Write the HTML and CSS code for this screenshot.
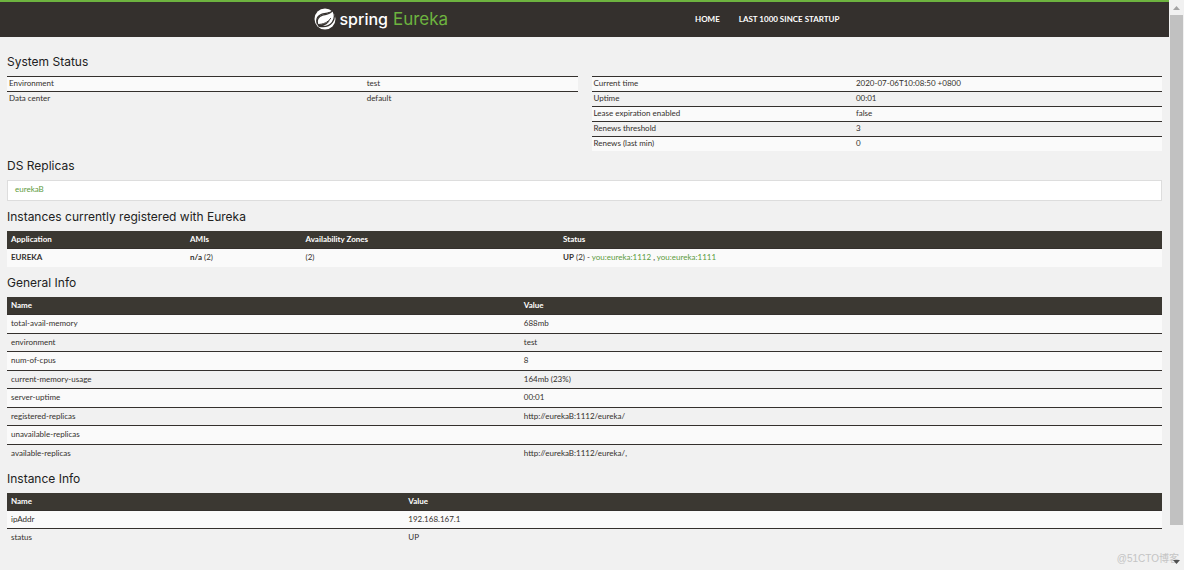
FILE: index.html
```html
<!DOCTYPE html>
<html lang="en">
<head>
<meta charset="utf-8">
<title>Eureka</title>
<link rel="stylesheet" href="styles.css">
</head>
<body>
<div class="window">
  <div class="page">
    <header class="navbar">
      <div class="navbar-inner">
        <a class="brand" href="#">
          <svg class="brand-mark" viewBox="0 0 22 22" aria-hidden="true">
            <circle cx="11" cy="11" r="10.500" fill="#fff"/>
            <path fill="#34302d" d="M18.900 2C16.800 5.500 12.800 5.700 9 6.600 4 7.900 2 11.700 3.400 16.400c1.800.3 3.400.2 4.800-.2 3.700-.8 6.200-2.400 8.300-5-1.800 4.100-5.400 6.600-10.500 7.300l-1.600.1-.6-1C.8 12.500 2.200 7.700 7.300 5.700 11.500 4.200 15.500 5 18.900 2z"/>
            <path fill="none" stroke="#34302d" stroke-width="1.300" d="M19 2.600c1.900 4.300 1.700 8.600-.7 11.700-2.900 3.700-8 5-13.600 3.800"/>
            <path fill="none" stroke="#34302d" stroke-width="1" d="M3.800 16.500c5.600-.2 9.800-1.800 13-6.400"/>
            <path fill="none" stroke="#34302d" stroke-width="1.300" d="M18.700 2.500C16 6.500 12 6.200 8.500 7.200c-4.300 1.200-6.300 4.800-5 9"/>
          </svg>
          <span class="brand-spring">spring</span>
          <span class="brand-eureka">Eureka</span>
        </a>
        <nav class="menu">
          <a href="#">HOME</a>
          <a href="#">LAST 1000 SINCE STARTUP</a>
        </nav>
      </div>
    </header>
    <main class="content">
      <h1>System Status</h1>
      <div class="status">
        <table class="compact env">
          <tbody>
            <tr><td class="key">Environment</td><td>test</td></tr>
            <tr><td>Data center</td><td>default</td></tr>
          </tbody>
        </table>
        <table class="compact runtime">
          <tbody>
            <tr><td class="key">Current time</td><td>2020-07-06T10:08:50 +0800</td></tr>
            <tr><td>Uptime</td><td>00:01</td></tr>
            <tr><td>Lease expiration enabled</td><td>false</td></tr>
            <tr><td>Renews threshold</td><td>3</td></tr>
            <tr><td>Renews (last min)</td><td>0</td></tr>
          </tbody>
        </table>
      </div>
      <h1>DS Replicas</h1>
      <ul class="replicas">
        <li><a href="#">eurekaB</a></li>
      </ul>
      <h1>Instances currently registered with Eureka</h1>
      <table class="striped instances">
        <thead>
          <tr><th class="app">Application</th><th class="amis">AMIs</th><th class="zones">Availability Zones</th><th>Status</th></tr>
        </thead>
        <tbody>
          <tr><td><b>EUREKA</b></td><td><b>n/a</b> (2)</td><td>(2)</td><td><b>UP</b> (2) - <a href="#">you:eureka:1112</a> , <a href="#">you:eureka:1111</a></td></tr>
        </tbody>
      </table>
      <h1>General Info</h1>
      <table class="striped general">
        <thead>
          <tr><th class="name">Name</th><th>Value</th></tr>
        </thead>
        <tbody>
          <tr><td>total-avail-memory</td><td>688mb</td></tr>
          <tr><td>environment</td><td>test</td></tr>
          <tr><td>num-of-cpus</td><td>8</td></tr>
          <tr><td>current-memory-usage</td><td>164mb (23%)</td></tr>
          <tr><td>server-uptime</td><td>00:01</td></tr>
          <tr><td>registered-replicas</td><td>http://eurekaB:1112/eureka/</td></tr>
          <tr><td>unavailable-replicas</td><td></td></tr>
          <tr><td>available-replicas</td><td>http://eurekaB:1112/eureka/,</td></tr>
        </tbody>
      </table>
      <h1>Instance Info</h1>
      <table class="striped instance">
        <thead>
          <tr><th class="name">Name</th><th>Value</th></tr>
        </thead>
        <tbody>
          <tr><td>ipAddr</td><td>192.168.167.1</td></tr>
          <tr><td>status</td><td>UP</td></tr>
        </tbody>
      </table>
    </main>
  </div>
  <div class="watermark">@51CTO博客</div>
  <div class="scrollbar" aria-hidden="true">
    <svg class="arrow up" viewBox="0 0 7 4"><path d="M0 4 3.500 0 7 4z"/></svg>
    <div class="track"><div class="thumb"></div></div>
    <svg class="arrow down" viewBox="0 0 7 4"><path d="M0 0h7L3.500 4z"/></svg>
  </div>
</div>
</body>
</html>
```
FILE: styles.css
```css
* {
  box-sizing: border-box;
}

body {
  margin: 0;
  background: #f1f1f1;
  color: #34302d;
  font-family: Lato, "Open Sans", sans-serif;
  font-size: 8px;
  line-height: 12px;
}

a {
  color: #5b9a3c;
  text-decoration: none;
}

.window {
  position: relative;
  display: flex;
  height: 100vh;
  overflow: hidden;
  background: #f1f1f1;
}

.page {
  flex: 1;
  min-width: 0;
}

.navbar {
  border-top: 2px solid #6db33f;
  background: #34302d;
}

.navbar-inner {
  display: flex;
  justify-content: space-between;
  align-items: center;
  width: 542px;
  height: 35px;
  margin: 0 auto;
  padding: 0 16px 2px 0;
}

.brand {
  display: flex;
  align-items: center;
  line-height: 20px;
}

.brand-mark {
  width: 22px;
  height: 22px;
  margin-right: 4px;
}

.brand-spring {
  margin-right: 5px;
  color: #fff;
  font-family: Inter, sans-serif;
  font-size: 16px;
  font-weight: 500;
}

.brand-eureka {
  color: #6db33f;
  font-family: Inter, sans-serif;
  font-size: 17px;
  font-weight: 400;
}

.menu {
  display: flex;
  gap: 19px;
  font-weight: 700;
}

.menu a {
  color: #fff;
}

.content {
  padding: 17px 7px 0;
}

h1 {
  margin: 0;
  color: #222;
  font-family: Inter, sans-serif;
  font-size: 12px;
  font-weight: 400;
  line-height: 16px;
  padding-bottom: 6px;
}

table {
  width: 100%;
  border-collapse: collapse;
  table-layout: fixed;
}

th,
td {
  text-align: left;
  vertical-align: top;
}

tbody tr:nth-child(odd) {
  background: #fafafa;
}

.status {
  display: grid;
  grid-template-columns: 1fr 1fr;
  align-items: start;
  gap: 14px;
  margin-bottom: 7px;
}

.compact td {
  height: 15px;
  padding: 0 2px;
  border-top: 1px solid #34302d;
}

.compact tr:last-child td {
  height: 14px;
}

.env .key {
  width: 62.7%;
}

.runtime .key {
  width: 46%;
}

.replicas {
  margin: 0 0 8px;
  padding: 0;
  list-style: none;
}

.replicas li {
  height: 21px;
  padding: 2px 7px;
  border: 1px solid #ddd;
  background: #fff;
}

.striped {
  margin-bottom: 8px;
}

.striped th {
  height: 18px;
  padding: 2px 4px;
  background: #3b3832;
  color: #fff;
  font-weight: 700;
}

.striped td {
  height: 18px;
  padding: 2px 4px;
  border-top: 1px solid #34302d;
}

.general tr:nth-child(odd) td {
  height: 19px;
}

.instances .app {
  width: 15.5%;
}

.instances .amis {
  width: 10%;
}

.instances .zones {
  width: 22.3%;
}

.general .name {
  width: 44.4%;
}

.instance .name {
  width: 34.4%;
}

.scrollbar {
  position: relative;
  display: flex;
  flex-direction: column;
  align-items: center;
  width: 15px;
  padding: 6px 1px;
}

.arrow {
  flex: none;
  width: 7px;
  height: 4px;
  fill: #a3a3a3;
}

.arrow.down {
  fill: #505050;
}

.track {
  flex: 1;
  align-self: stretch;
  margin: 5px 0;
}

.thumb {
  height: 94.5%;
  background: #c1c1c1;
}

.watermark {
  position: absolute;
  right: 5px;
  bottom: 4px;
  color: #c4c4c4;
  font-family: "Liberation Sans", "Noto Sans CJK SC", sans-serif;
  font-size: 10px;
  line-height: 14px;
}
```
